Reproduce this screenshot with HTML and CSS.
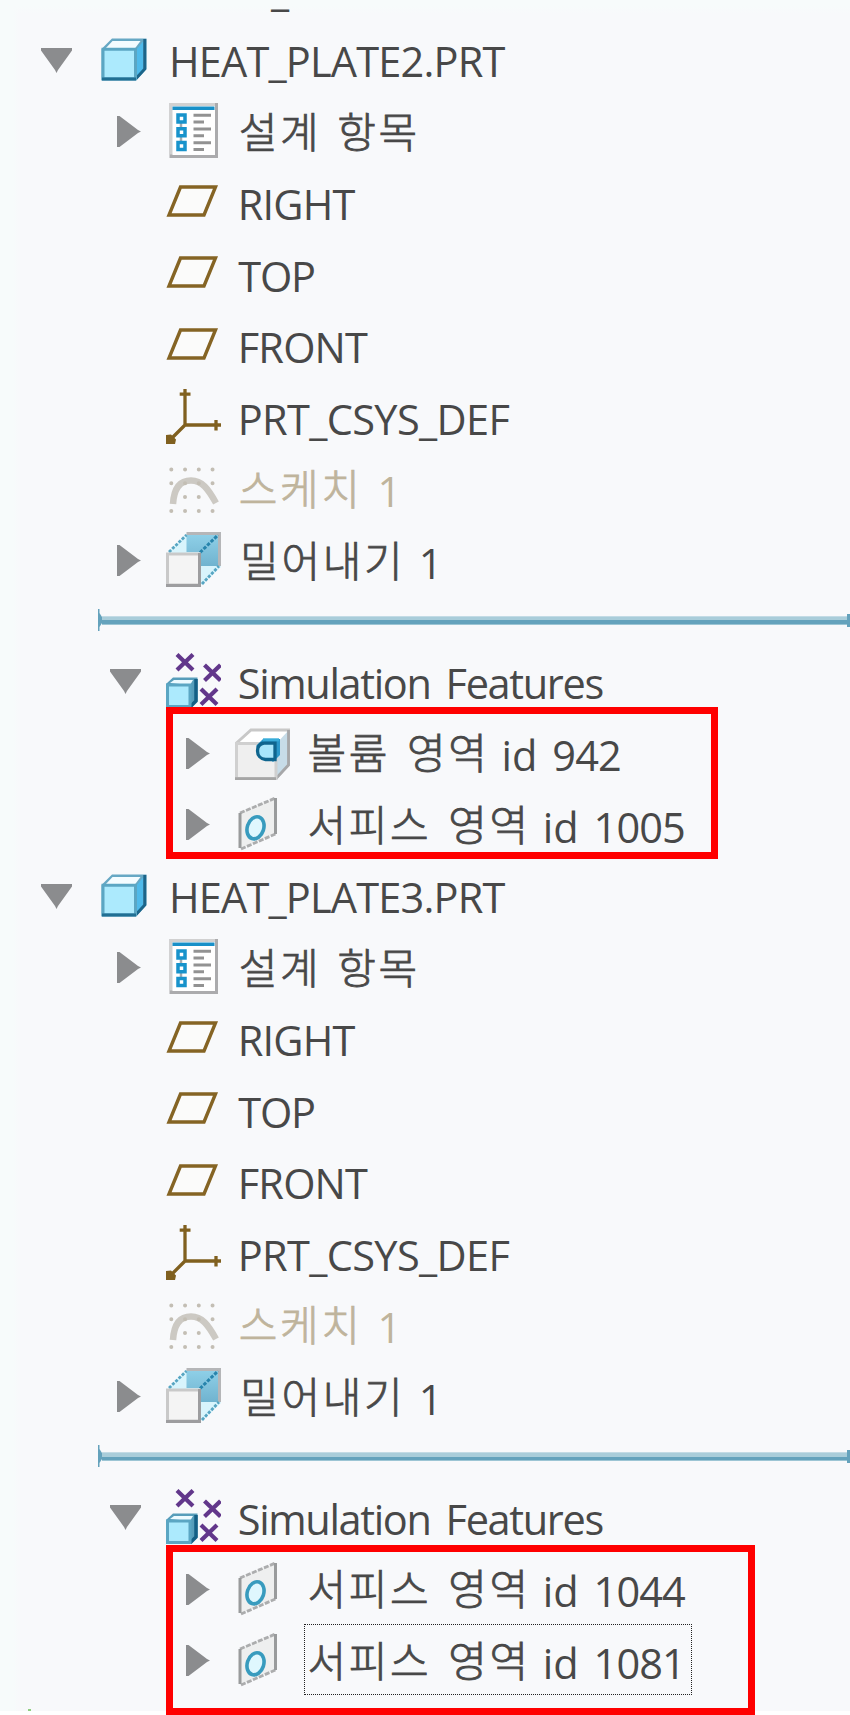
FILE: index.html
```
<!DOCTYPE html>
<html lang="ko">
<head>
<meta charset="utf-8">
<title>Model Tree</title>
<link rel="stylesheet" href="styles.css">
</head>
<body>
<svg class="defs" aria-hidden="true">
  <defs>
    <linearGradient id="glass" x1="0" y1="0" x2="0" y2="1"><stop offset="0" stop-color="#8fd0e8"/><stop offset="1" stop-color="#70b3cf"/></linearGradient>
  </defs>
  <symbol id="down" viewBox="0 0 31 31"><path d="M0 3h31v2.500L17 25 15.500 28l-1.500-3L0 5.500z" fill="#8b8c8e"/></symbol>
  <symbol id="right" viewBox="0 0 31 31"><path d="M7 0h2.500L28 14 31 15.500l-3 1.500L9.500 31H7z" fill="#8b8c8e"/></symbol>
  <symbol id="part" viewBox="0 0 55 55">
    <path d="M3.500 17l10.500-10.500H48.500V37L38 48.500H3.500z" fill="#67a8c4"/>
    <path d="M7 17l7.500-8h28l-6 8z" fill="#f4fcff"/>
    <path d="M38 18l7-8.500V38l-7 7z" fill="#4fbaea"/>
    <path d="M46.800 7v30L38 46.500" fill="none" stroke="#1b658a" stroke-width="3"/>
    <path d="M5 17.300h32.500v29.500H5z" fill="#aceafd" stroke="#5ba6c3" stroke-width="3"/>
    <path d="M4 47h34" stroke="#216f93" stroke-width="3"/>
  </symbol>
  <symbol id="items" viewBox="0 0 55 55">
    <path d="M3.500 0H52v55H3.500z" fill="#ababad"/>
    <path d="M3.500 0H49v51.500H3.500z" fill="#d1d1d1"/>
    <path d="M6.500 3h42.500v49H6.500z" fill="#fff"/>
    <path d="M6.500 3.500H48.500v3.500H6.500z" fill="#1890c8"/>
    <path d="M15 20v22" stroke="#a2abb0" stroke-width="2.500"/>
    <path d="M12 12h7v7h-7zM12 25.800h7v7h-7zM12 39.500h7v7h-7z" fill="#fff" stroke="#1893cb" stroke-width="3.500"/>
    <path d="M27.500 12.200h17.500M27.500 19h10.500M27.500 26h17.500M27.500 32.700h10.500M27.500 39.700h17.500M27.500 46.500h10.500" stroke="#929292" stroke-width="3"/>
  </symbol>
  <symbol id="plane" viewBox="0 0 55 55">
    <path d="M14.500 12H49.500L38 40H3z" fill="#fbfbfa" stroke="#856424" stroke-width="3.400"/>
  </symbol>
  <symbol id="csys" viewBox="0 0 55 55">
    <path d="M19 0v36H55M13.700 5.200H24.500M50 31v10.500M19 36L4 51" fill="none" stroke="#80601f" stroke-width="3.300"/>
    <path d="M0 46l5-.5 5 5-1 4.500H0z" fill="#80601f"/>
  </symbol>
  <symbol id="sketch" viewBox="0 0 55 55">
    <path d="M7 43C8 26 15 19.500 25 19.500c11 0 17 8 25 22.500" fill="none" stroke="#ccc9c3" stroke-width="6.500"/>
    <g fill="none" stroke="#c3beb4" stroke-width="4" stroke-linecap="round" stroke-dasharray="0 13.750"><path d="M5.300 8.500H47M5.300 22.300H47M19 36H34M5.300 50H47"/></g>
  </symbol>
  <symbol id="extrude" viewBox="0 0 55 55">
    <path d="M2 20L20.500 2H55v33L36 53z" fill="#d8f4fc"/>
    <path d="M20.500 2H53v32H34V20H20.500z" fill="url(#glass)"/>
    <path d="M20.500 1.500H53.500V34" fill="none" stroke="#b5b6b8" stroke-width="3"/>
    <path d="M3 20L20.500 3M36 52L53 34" fill="none" stroke="#57a5c2" stroke-width="2.800" stroke-dasharray="3 1.500"/>
    <path d="M34 20.500L52 3" stroke="#2784ac" stroke-width="3" stroke-dasharray="3.500 1.500"/>
    <path d="M1.500 22H33.500V53H1.500z" fill="#f4f4f4" stroke="#c9c9c9" stroke-width="3"/>
    <path d="M33.500 21v32.500H0" fill="none" stroke="#9d9d9f" stroke-width="3"/>
  </symbol>
  <symbol id="sim" viewBox="0 0 55 55">
    <path d="M0 31l7-6.500H31.500V48L24 55H0z" fill="#579dba"/>
    <path d="M30 26v22l-6 6" fill="none" stroke="#155f85" stroke-width="3.500"/>
    <path d="M4 30l4-3h19l-3 5z" fill="#ecfaff"/>
    <path d="M1.500 32h22.500v21.500H1.500z" fill="#aceafd" stroke="#5ba6c3" stroke-width="3"/>
    <g stroke="#62378b" stroke-width="4.200"><path d="M11 1.500L27 17M27 1.500L11 17M38.500 12L54.500 27.500M54.500 12L38.500 27.500M35 36L51 51.500M51 36L35 51.500"/></g>
  </symbol>
  <symbol id="volume" viewBox="0 0 55 55">
    <path d="M1.500 18L16 5H53.500V40L40 54H1.500z" fill="#fff" stroke="#c8c8c8" stroke-width="3"/>
    <path d="M41 19L53 6v33L41 52z" fill="#c7dce8"/>
    <path d="M53.500 5v35L41 53.500" fill="none" stroke="#a6a7a9" stroke-width="2.800"/>
    <path d="M1.500 18.500H41V53.500H1.500z" fill="#efefef" stroke="#d0d0d0" stroke-width="3"/>
    <path d="M0 53.700h41" stroke="#a5a5a5" stroke-width="3"/>
    <path d="M21 21l7-7H45V30L38 37z" fill="#2a97c9"/>
    <path d="M29 18H40V34.500H30.500C25.500 34 22.500 30.500 22.500 26S25 18.500 29 18z" fill="#a8e6fb" stroke="#0f658e" stroke-width="3.300"/>
    <path d="M28 14.800h16" stroke="#38acd9" stroke-width="3"/>
  </symbol>
  <symbol id="surface" viewBox="0 0 55 55">
    <path d="M5 17L40.500 2V38L6 52.500z" fill="#eeefef"/>
    <path d="M5 17L40.500 2M6 53L40.500 38" fill="none" stroke="#acadae" stroke-width="2.800" stroke-dasharray="5 1.500"/>
    <path d="M5 17v35M40.500 2v36" stroke="#999b9c" stroke-width="3"/>
    <ellipse cx="20.500" cy="31.800" rx="8.200" ry="11.300" transform="rotate(18 20.500 31.800)" fill="#dff7fe" stroke="#389bbe" stroke-width="3.600"/>
  </symbol>
</svg>

<main class="tree">
  <div class="clipped">_</div>

  <section class="model">
    <div class="row l1"><svg class="toggle"><use href="#down"/></svg><svg class="icon"><use href="#part"/></svg><p class="label"><span class="caps">HEAT_PLATE2.PRT</span></p></div>
    <div class="row l2"><svg class="toggle"><use href="#right"/></svg><svg class="icon"><use href="#items"/></svg><p class="label"><span class="ko">설계</span><span class="ko">항목</span></p></div>
    <div class="row l2"><span class="toggle"></span><svg class="icon"><use href="#plane"/></svg><p class="label"><span class="caps">RIGHT</span></p></div>
    <div class="row l2"><span class="toggle"></span><svg class="icon"><use href="#plane"/></svg><p class="label"><span class="caps top">TOP</span></p></div>
    <div class="row l2"><span class="toggle"></span><svg class="icon"><use href="#plane"/></svg><p class="label"><span class="caps">FRONT</span></p></div>
    <div class="row l2"><span class="toggle"></span><svg class="icon"><use href="#csys"/></svg><p class="label"><span class="caps csys">PRT_CSYS_DEF</span></p></div>
    <div class="row l2 hidden-item"><span class="toggle"></span><svg class="icon"><use href="#sketch"/></svg><p class="label"><span class="ko">스케치</span><span class="num">1</span></p></div>
    <div class="row l2"><svg class="toggle"><use href="#right"/></svg><svg class="icon"><use href="#extrude"/></svg><p class="label"><span class="ko push">밀어내기</span><span class="num">1</span></p></div>
    <div class="insert"><svg class="cap" viewBox="0 0 4 22"><path d="M0 0h1.500v4L4 8v6l-2.500 4v4H0z" fill="#64a2bc"/></svg><span class="bar"></span><span class="end"></span></div>
    <div class="row l2"><svg class="toggle"><use href="#down"/></svg><svg class="icon"><use href="#sim"/></svg><p class="label"><span class="mixed">Simulation</span><span class="mixed">Features</span></p></div>
    <div class="marked first">
      <div class="row l3"><svg class="toggle"><use href="#right"/></svg><svg class="icon"><use href="#volume"/></svg><p class="label"><span class="ko">볼륨</span><span class="ko area">영역</span><span class="id">id</span><span class="num">942</span></p></div>
      <div class="row l3"><svg class="toggle"><use href="#right"/></svg><svg class="icon"><use href="#surface"/></svg><p class="label"><span class="ko">서피스</span><span class="ko area">영역</span><span class="id">id</span><span class="num">1005</span></p></div>
    </div>
  </section>

  <section class="model">
    <div class="row l1"><svg class="toggle"><use href="#down"/></svg><svg class="icon"><use href="#part"/></svg><p class="label"><span class="caps">HEAT_PLATE3.PRT</span></p></div>
    <div class="row l2"><svg class="toggle"><use href="#right"/></svg><svg class="icon"><use href="#items"/></svg><p class="label"><span class="ko">설계</span><span class="ko">항목</span></p></div>
    <div class="row l2"><span class="toggle"></span><svg class="icon"><use href="#plane"/></svg><p class="label"><span class="caps">RIGHT</span></p></div>
    <div class="row l2"><span class="toggle"></span><svg class="icon"><use href="#plane"/></svg><p class="label"><span class="caps top">TOP</span></p></div>
    <div class="row l2"><span class="toggle"></span><svg class="icon"><use href="#plane"/></svg><p class="label"><span class="caps">FRONT</span></p></div>
    <div class="row l2"><span class="toggle"></span><svg class="icon"><use href="#csys"/></svg><p class="label"><span class="caps csys">PRT_CSYS_DEF</span></p></div>
    <div class="row l2 hidden-item"><span class="toggle"></span><svg class="icon"><use href="#sketch"/></svg><p class="label"><span class="ko">스케치</span><span class="num">1</span></p></div>
    <div class="row l2"><svg class="toggle"><use href="#right"/></svg><svg class="icon"><use href="#extrude"/></svg><p class="label"><span class="ko push">밀어내기</span><span class="num">1</span></p></div>
    <div class="insert"><svg class="cap" viewBox="0 0 4 22"><path d="M0 0h1.500v4L4 8v6l-2.500 4v4H0z" fill="#64a2bc"/></svg><span class="bar"></span><span class="end"></span></div>
    <div class="row l2"><svg class="toggle"><use href="#down"/></svg><svg class="icon"><use href="#sim"/></svg><p class="label"><span class="mixed">Simulation</span><span class="mixed">Features</span></p></div>
    <div class="marked second">
      <div class="row l3"><svg class="toggle"><use href="#right"/></svg><svg class="icon"><use href="#surface"/></svg><p class="label"><span class="ko">서피스</span><span class="ko area">영역</span><span class="id">id</span><span class="num">1044</span></p></div>
      <div class="row l3"><svg class="toggle"><use href="#right"/></svg><svg class="icon"><use href="#surface"/></svg><p class="label focused"><span class="ko">서피스</span><span class="ko area">영역</span><span class="id">id</span><span class="num">1081</span></p></div>
    </div>
  </section>
  <span class="speck"></span>
</main>
</body>
</html>
```
FILE: styles.css
```
*, *::before, *::after { box-sizing: border-box; }

body {
  margin: 0;
  height: 1715px;
  background: #fff;
  color: #484848;
  font: 41.5px/65.7px "Open Sans", "Noto Sans CJK KR", sans-serif;
}

.defs { display: block; width: 0; height: 0; }

.tree {
  display: flow-root;
  position: relative;
  width: 850px;
  height: 1711px;
  background:
    linear-gradient(90deg, #f7fbfb 0, #f7fbfb 13px, transparent 19px),
    linear-gradient(180deg, #f7fbfb 0, #f7fbfb 6px, transparent 14px),
    #f8f9fb;
}

/* the row above is scrolled out, only its underscore stays in view */
.clipped {
  height: 29px;
  margin: -10px 0 10px;
  padding-left: 271px;
  line-height: 0;
}

.row { display: flex; height: 71.5px; }
.l1 { padding-left: 41px; }
.l2 { padding-left: 109.75px; }
.l3 { padding-left: 178.5px; }

.toggle { flex: none; width: 31px; height: 31px; margin: 15.5px 25.5px 0 0; }
.icon { flex: none; width: 55px; height: 55px; margin: 2.5px 16.5px 0 0; }

.label {
  position: relative;
  display: flex;
  align-items: baseline;
  gap: 15px;
  margin: 0;
  white-space: nowrap;
}

.caps { letter-spacing: -0.82px; }
.top { margin-left: 0.5px; letter-spacing: -1.2px; }
.csys { letter-spacing: -0.65px; }
.mixed { letter-spacing: -1.35px; }
.num { letter-spacing: -0.9px; }
.ko {
  margin-left: 1px;
  font-family: "Noto Sans CJK KR", sans-serif;
  font-size: 42px;
  font-weight: 300;
  line-height: 61.4px;
  letter-spacing: 2.6px;
  -webkit-text-stroke: 0.8px currentColor;
  transform: translateY(-2px);
}
.push { margin: 0 -1.5px 0 2.5px; }
.area { margin-left: 2px; }
.id { margin-left: -3px; }

.hidden-item { color: #bfb49c; }

.insert {
  display: flex;
  align-items: center;
  height: 49.5px;
  padding: 0 0 11px 98px;
}
.cap { flex: none; width: 4px; height: 22px; }
.bar {
  flex: 1;
  height: 9px;
  background: linear-gradient(#c3dbe5 0 1px, #a9cdda 1px 4.5px, #64a2bc 4.5px 8px, #9cc5d4 8px);
}
.end { width: 3px; height: 13px; background: #64a2bc; }

.marked { position: relative; }
.marked::after {
  content: "";
  position: absolute;
  left: 166px;
  border: 7px solid #f00;
}
.first::after { top: -15px; width: 552px; height: 152px; }
.second::after { top: -13px; width: 589px; height: 170px; }

.focused::before {
  content: "";
  position: absolute;
  inset: -5.5px auto auto -2.5px;
  width: 388px;
  height: 71px;
  border: 1px dotted #222;
}

.speck {
  position: absolute;
  left: 28px;
  bottom: 0;
  width: 3px;
  height: 2px;
  background: #8fcf80;
}
```
